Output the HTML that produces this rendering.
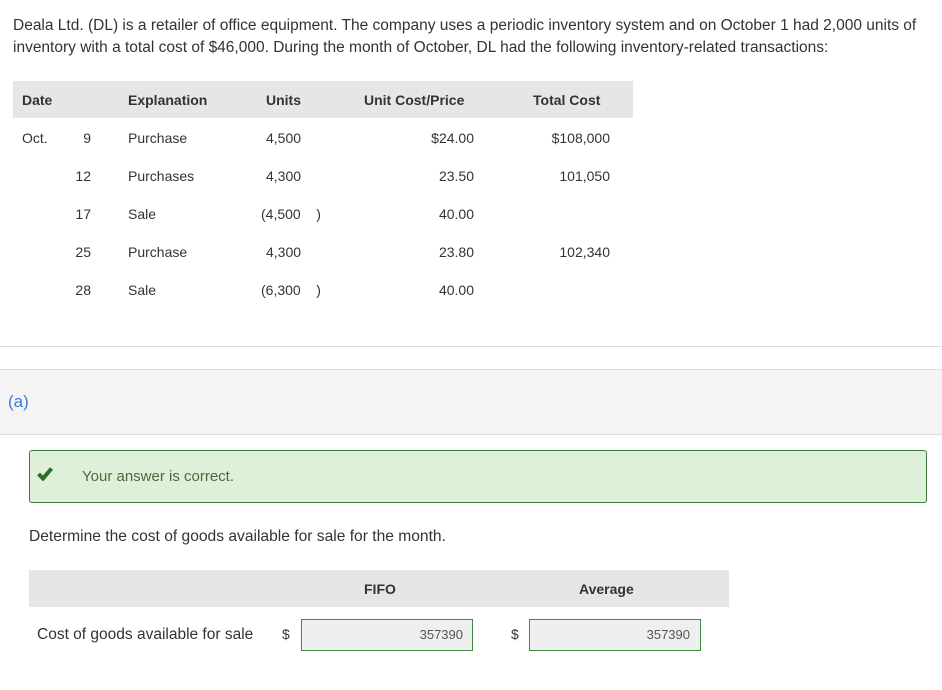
<!DOCTYPE html>
<html><head><style>
body{margin:0;width:942px;height:690px;background:#fff;font-family:"Liberation Sans",sans-serif;color:#333;position:relative;overflow:hidden}
.a{position:absolute;white-space:nowrap;font-size:14px}
.b{font-weight:bold}
.r{text-align:right}
</style></head><body>
<div class="a" style="left:13px;top:15px;font-size:15.5px;line-height:22px">Deala Ltd. (DL) is a retailer of office equipment. The company uses a periodic inventory system and on October 1 had 2,000 units of<br>inventory with a total cost of $46,000. During the month of October, DL had the following inventory-related transactions:</div>
<div style="position:absolute;left:13px;top:81px;width:620px;height:37px;background:#e6e6e6"></div>
<div class="a b" style="left:22px;top:92px">Date</div>
<div class="a b" style="left:128px;top:92px">Explanation</div>
<div class="a b" style="left:266px;top:92px">Units</div>
<div class="a b" style="left:364px;top:92px">Unit Cost/Price</div>
<div class="a b" style="left:533px;top:92px">Total Cost</div>
<div class="a" style="left:22px;top:130px">Oct.</div>
<div class="a r" style="left:60px;width:31px;top:130px">9</div>
<div class="a r" style="left:60px;width:31px;top:168px">12</div>
<div class="a r" style="left:60px;width:31px;top:206px">17</div>
<div class="a r" style="left:60px;width:31px;top:244px">25</div>
<div class="a r" style="left:60px;width:31px;top:282px">28</div>
<div class="a" style="left:128px;top:130px">Purchase</div>
<div class="a" style="left:128px;top:168px">Purchases</div>
<div class="a" style="left:128px;top:206px">Sale</div>
<div class="a" style="left:128px;top:244px">Purchase</div>
<div class="a" style="left:128px;top:282px">Sale</div>
<div class="a" style="left:266px;top:130px">4,500</div>
<div class="a" style="left:266px;top:168px">4,300</div>
<div class="a" style="left:261px;top:206px">(4,500&nbsp;&nbsp;&nbsp;&nbsp;)</div>
<div class="a" style="left:266px;top:244px">4,300</div>
<div class="a" style="left:261px;top:282px">(6,300&nbsp;&nbsp;&nbsp;&nbsp;)</div>
<div class="a r" style="left:374px;width:100px;top:130px">$24.00</div>
<div class="a r" style="left:374px;width:100px;top:168px">23.50</div>
<div class="a r" style="left:374px;width:100px;top:206px">40.00</div>
<div class="a r" style="left:374px;width:100px;top:244px">23.80</div>
<div class="a r" style="left:374px;width:100px;top:282px">40.00</div>
<div class="a r" style="left:510px;width:100px;top:130px">$108,000</div>
<div class="a r" style="left:510px;width:100px;top:168px">101,050</div>
<div class="a r" style="left:510px;width:100px;top:244px">102,340</div>
<div style="position:absolute;left:0;top:346px;width:942px;height:1px;background:#ddd"></div>
<div style="position:absolute;left:0;top:369px;width:942px;height:64px;background:#f4f4f4;border-top:1px solid #ddd;border-bottom:1px solid #ddd"></div>
<div class="a" style="left:8px;top:392px;font-size:17px;color:#3a7fd5">(a)</div>
<div style="position:absolute;left:29px;top:450px;width:896px;height:51px;background:#dff0d8;border:1px solid #3e7a3e;border-radius:3px"></div>
<svg style="position:absolute;left:37px;top:467px" width="16" height="14" viewBox="0 0 16 14"><path d="M1.5 7 L6 11.5 L14.5 1.5" fill="none" stroke="#2e6b2e" stroke-width="4"/></svg>
<div class="a" style="left:82px;top:468px;font-size:15px;color:#4a6a3a">Your answer is correct.</div>
<div class="a" style="left:29px;top:528px;font-size:15.6px">Determine the cost of goods available for sale for the month.</div>
<div style="position:absolute;left:29px;top:570px;width:700px;height:37px;background:#e6e6e6"></div>
<div class="a b" style="left:364px;top:581px">FIFO</div>
<div class="a b" style="left:579px;top:581px">Average</div>
<div class="a" style="left:37px;top:626px;font-size:15.5px">Cost of goods available for sale</div>
<div class="a" style="left:282px;top:626px">$</div>
<div class="a" style="left:511px;top:626px">$</div>
<div style="position:absolute;left:301px;top:619px;width:170px;height:30px;background:#efefef;border:1px solid #3e8a3e"></div>
<div style="position:absolute;left:529px;top:619px;width:170px;height:30px;background:#efefef;border:1px solid #3e8a3e"></div>
<div class="a r" style="left:363px;width:100px;top:627px;font-size:13px;color:#555">357390</div>
<div class="a r" style="left:590px;width:100px;top:627px;font-size:13px;color:#555">357390</div>
</body></html>
